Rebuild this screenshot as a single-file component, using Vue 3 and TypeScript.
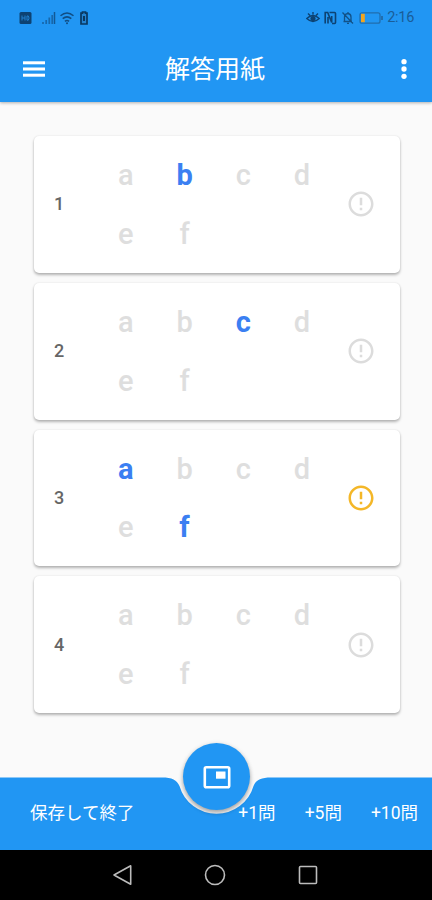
<script setup lang="ts">
interface Question {
  id: number
  selected: string[]
  flagged: boolean
}

const choices: string[] = ['a', 'b', 'c', 'd', 'e', 'f']

const questions: Question[] = [
  { id: 1, selected: ['b'], flagged: false },
  { id: 2, selected: ['c'], flagged: false },
  { id: 3, selected: ['a', 'f'], flagged: true },
  { id: 4, selected: [], flagged: false },
]
</script>

<template>
  <div class="screen">
    <header class="header">
      <div class="status">
        <svg class="status-left" width="80" height="18" viewBox="0 0 80 18">
          <rect x="0.5" y="3" width="12" height="12" rx="1.5" fill="#0d4272" />
          <path d="M3 6.5v5M6 6.5v5M3 9h3M8 7v4.200h1.300q1.500-2.100 0-4.200z" stroke="#2080d0" stroke-width="1" fill="none" />
          <path d="M24 15v-2M27.200 15v-4M30.300 15v-6.500M33.200 15V6" stroke="#1767ab" stroke-width="1.700" />
          <path d="M35.500 15V3" stroke="#125895" stroke-width="1.500" />
          <path d="M41.500 6.800q6.500-5.500 13 0M43.700 9.700q4.300-3.600 8.600 0M45.900 12.300q2.100-1.600 4.200 0" stroke="#104d83" stroke-width="1.500" fill="none" />
          <circle cx="48" cy="14.300" r="1" fill="#104d83" />
          <path d="M63.500 3h3v1.200h1.500v10.800h-6V4.200h1.500z" fill="#2383d2" stroke="#093861" stroke-width="1.700" />
          <path d="M65 7v5" stroke="#093861" stroke-width="2" />
        </svg>
        <div class="status-right">
          <svg width="78" height="18" viewBox="0 0 78 18">
            <path d="M0.800 9.500Q7 3.500 13.200 9.500Q7 15.500 0.800 9.500zM2 4.500l2 2M7 3v2.500M12 4.500l-2 2" stroke="#0d4272" stroke-width="1.400" fill="none" />
            <circle cx="7" cy="9.500" r="2.600" fill="#0d4272" />
            <path d="M19.200 14.500v-11h2.500l4 10V7M22 14.500V8M23.500 3.500h5q1 0 1 1v9q0 1-1 1H26" stroke="#0d4272" stroke-width="1.600" fill="none" />
            <path d="M37.500 12.500h8.500M38.500 12V8q0-3 3.500-3.500Q45 5 45 8v4M42 4.500V3M41 14.300h2M36.500 3.500l10.500 11" stroke="#125288" stroke-width="1.300" fill="none" />
            <rect x="54" y="3.800" width="20" height="10.400" rx="2" stroke="#216eae" stroke-width="1.300" fill="none" />
            <path d="M76 7v4" stroke="#216eae" stroke-width="2" />
            <rect x="55" y="4.800" width="3.800" height="8.400" fill="#f3a51d" />
          </svg>
          <span class="clock">2:16</span>
        </div>
      </div>
      <div class="appbar">
        <button class="icon-button" aria-label="menu">
          <svg width="22" height="16" viewBox="0 0 22 16" fill="#fff">
            <rect y="0.300" width="22" height="3" />
            <rect y="6.500" width="22" height="3" />
            <rect y="12.700" width="22" height="3" />
          </svg>
        </button>
        <h1 class="title">解答用紙</h1>
        <button class="icon-button more" aria-label="more">
          <svg width="6" height="20" viewBox="0 0 6 20" fill="#fff">
            <circle cx="3" cy="2.700" r="2.650" />
            <circle cx="3" cy="10" r="2.650" />
            <circle cx="3" cy="17.300" r="2.650" />
          </svg>
        </button>
      </div>
    </header>

    <main class="sheet">
      <section v-for="question in questions" :key="question.id" class="card">
        <span class="number">{{ question.id }}</span>
        <div class="choices">
          <span
            v-for="choice in choices"
            :key="choice"
            class="choice"
            :class="{ selected: question.selected.includes(choice) }"
          >{{ choice }}</span>
        </div>
        <svg class="flag" :class="{ flagged: question.flagged }" width="30" height="30" viewBox="0 0 24 24" fill="currentColor">
          <path d="M11 15h2v2h-2zm0-8h2v6h-2zm.99-5C6.470 2 2 6.480 2 12s4.470 10 9.990 10C17.520 22 22 17.520 22 12S17.520 2 11.990 2zM12 20c-4.420 0-8-3.580-8-8s3.580-8 8-8 8 3.580 8 8-3.580 8-8 8z" />
        </svg>
      </section>
    </main>

    <footer class="bottom">
      <svg class="bar-shape" width="432" height="73" viewBox="0 0 432 73">
        <path d="M0 0.500H162C172 0.500 177 3 179.500 9A38.500 38.500 0 0 0 253.500 9C256 3 261 0.500 271 0.500H432V73H0z" fill="#2196f3" />
      </svg>
      <button class="fab" aria-label="preview">
        <svg width="28" height="24" viewBox="0 0 28 24">
          <rect x="1.800" y="2.200" width="24.400" height="20" rx="1.500" fill="none" stroke="#fff" stroke-width="2.600" />
          <rect x="13" y="6.500" width="9.500" height="7.200" fill="#fff" />
        </svg>
      </button>
      <div class="actions">
        <button class="action save">保存して終了</button>
        <button class="action">+1問</button>
        <button class="action">+5問</button>
        <button class="action">+10問</button>
      </div>
    </footer>

    <nav class="system-nav">
      <svg width="22" height="24" viewBox="0 0 22 24"><path d="M18.700 2.800v18.400L2 12z" /></svg>
      <svg width="24" height="24" viewBox="0 0 24 24"><circle cx="12" cy="12" r="9.500" /></svg>
      <svg width="24" height="24" viewBox="0 0 24 24"><rect x="3.500" y="3.500" width="17" height="17" rx="1" /></svg>
    </nav>
  </div>
</template>

<style>
body {
  margin: 0;
}
</style>

<style scoped>
.screen {
  width: 432px;
  height: 900px;
  display: flex;
  flex-direction: column;
  overflow: hidden;
  background: #fafafa;
  font-family: Roboto, "Noto Sans CJK JP", sans-serif;
}

button {
  border: 0;
  padding: 0;
  background: none;
  color: inherit;
  font: inherit;
}

svg {
  display: block;
}

.header {
  height: 101.500px;
  flex: none;
  background: #2196f3;
  color: #fff;
  box-shadow: 0 1px 3px rgba(0, 0, 0, 0.3);
}

.status {
  height: 36px;
  padding: 0 18px 0 19px;
  display: flex;
  align-items: center;
  justify-content: space-between;
}

.status-right {
  display: flex;
  align-items: center;
  gap: 3px;
}

.clock {
  font-size: 14.500px;
  line-height: 18px;
  letter-spacing: -0.300px;
  color: #1a5d98;
}

.appbar {
  height: 65px;
  padding: 0 25px 0 23px;
  display: grid;
  grid-template-columns: 60px 1fr 60px;
  align-items: center;
}

.icon-button {
  height: 40px;
  display: flex;
  align-items: center;
}

.more {
  justify-content: flex-end;
}

.title {
  margin: 2px 0 0;
  text-align: center;
  font-size: 25px;
  line-height: 36px;
  font-weight: 400;
}

.sheet {
  flex: none;
  height: 675.500px;
  box-sizing: border-box;
  padding: 34.500px 32px 0 34px;
  display: flex;
  flex-direction: column;
  gap: 10px;
}

.card {
  height: 136.800px;
  flex: none;
  display: grid;
  grid-template-columns: 50px 234.800px 1fr;
  column-gap: 12.500px;
  align-items: center;
  border-radius: 5px;
  background: #fff;
  box-shadow: 0 2px 3px rgba(0, 0, 0, 0.28), 0 0 2px rgba(0, 0, 0, 0.1);
}

.number {
  text-align: center;
  font-size: 18px;
  font-weight: 500;
  line-height: 24px;
  color: #666;
}

.choices {
  display: grid;
  grid-template-columns: repeat(4, 58.700px);
  grid-auto-rows: 58.700px;
}

.choice {
  display: flex;
  align-items: center;
  justify-content: center;
  font-size: 29px;
  font-weight: 500;
  color: #dedede;
}

.choice.selected {
  font-weight: 700;
  color: #3b7ff2;
}

.flag {
  margin-left: 2px;
  color: #dcdcdc;
}

.flag.flagged {
  color: #f4b728;
}

.bottom {
  position: relative;
  flex: none;
  height: 72px;
}

.bar-shape {
  position: absolute;
  top: 0;
  left: 0;
}

.fab {
  position: absolute;
  top: -34px;
  left: 183px;
  width: 67px;
  height: 67px;
  display: flex;
  align-items: center;
  justify-content: center;
  border-radius: 50%;
  background: #2196f3;
  box-shadow: 0 3px 4px rgba(0, 0, 0, 0.25), 0 1px 5px rgba(0, 0, 0, 0.15);
}

.actions {
  position: relative;
  height: 72px;
  padding: 0 14px 0 30px;
  display: flex;
  align-items: center;
  gap: 29px;
  color: #fff;
  font-size: 17.500px;
  line-height: 26px;
}

.save {
  margin-right: auto;
}

.system-nav {
  flex: 1;
  padding: 0 112px;
  display: flex;
  align-items: center;
  justify-content: space-between;
  background: #000;
}

.system-nav svg {
  fill: none;
  stroke: #bcbcbc;
  stroke-width: 1.600;
  stroke-linejoin: round;
}
</style>
